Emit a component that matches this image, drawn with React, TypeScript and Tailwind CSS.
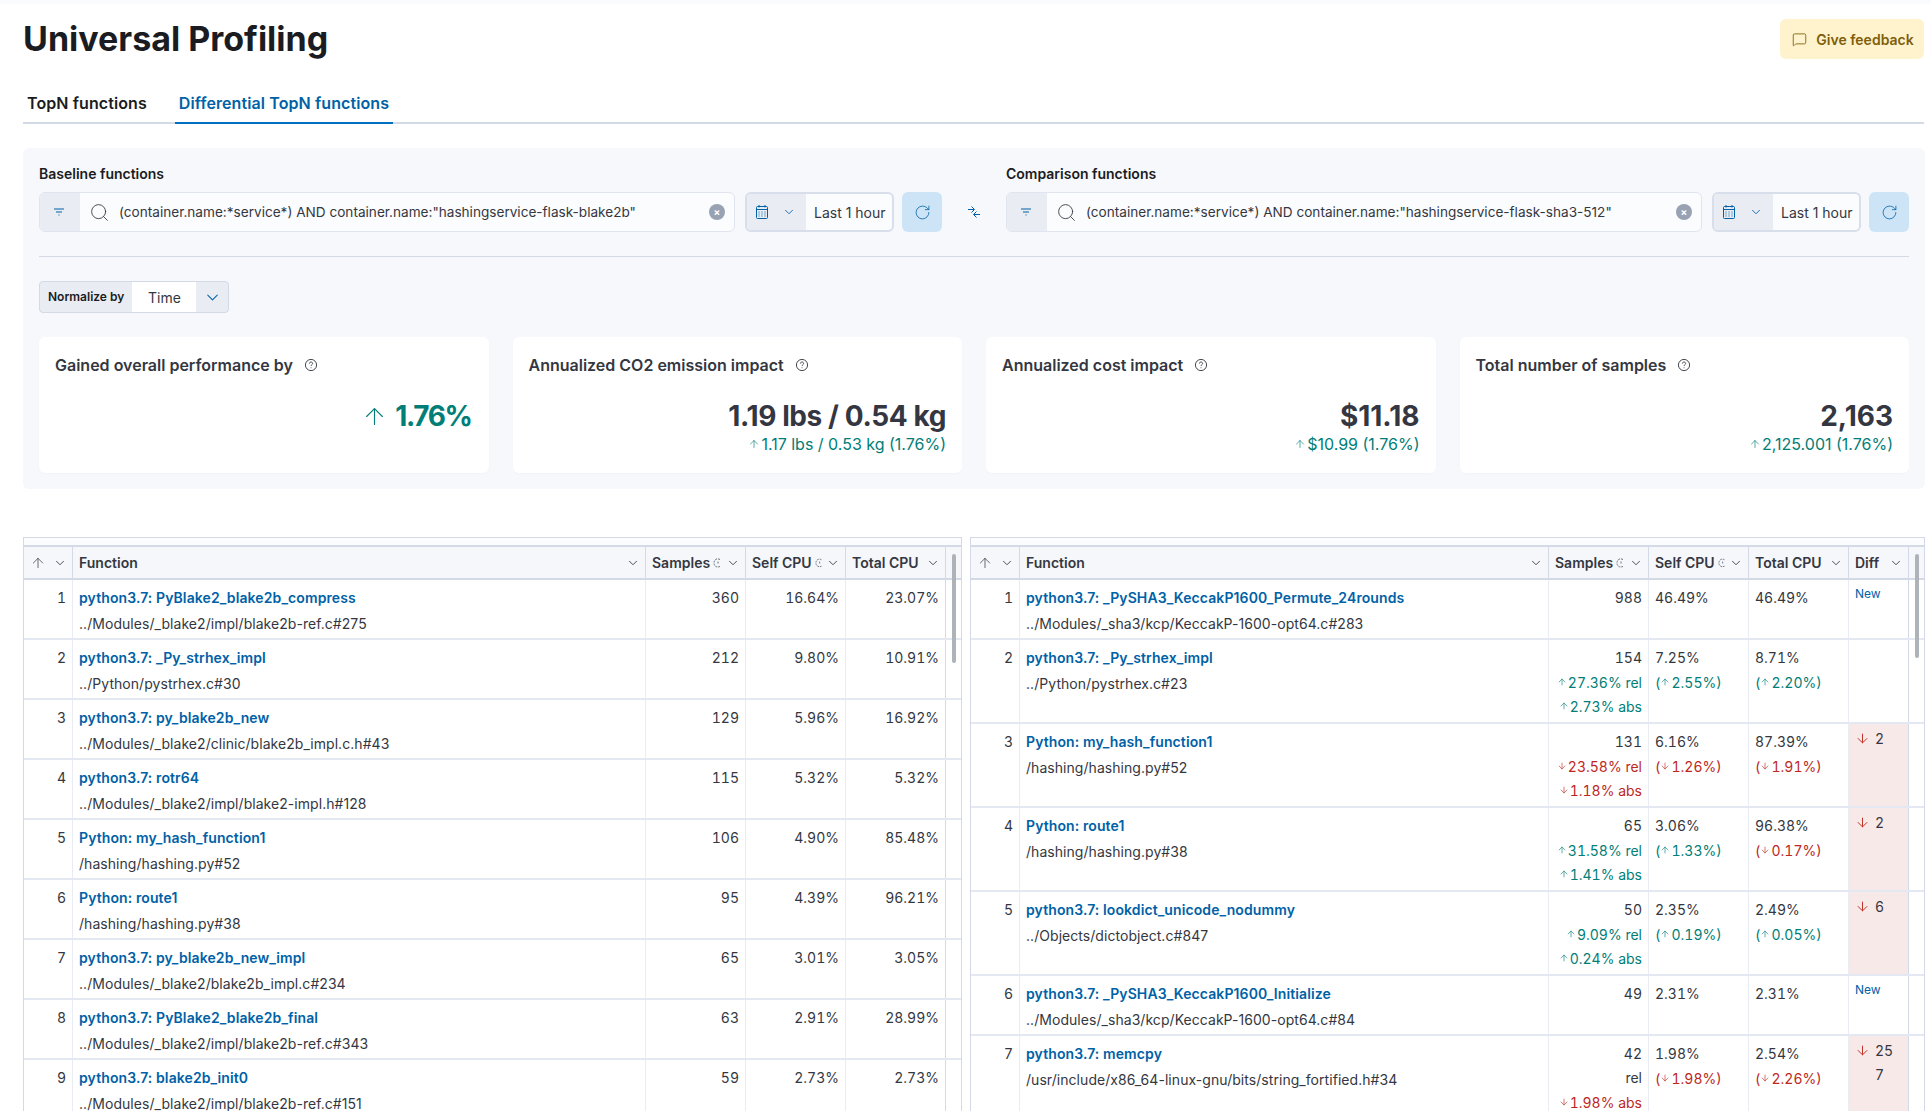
import { ArrowDown, ArrowUp, ChevronDown, MessageSquare, RotateCw, Search } from "lucide-react";
import type { ReactNode } from "react";

type Delta = { up: boolean; text: string };

type LeftRow = { fn: string; file: string; samples: string; self: string; total: string };

type RightRow = {
  fn: string;
  file: string;
  samples: string;
  rel?: Delta;
  abs?: Delta;
  self: string;
  selfDelta?: Delta;
  total: string;
  totalDelta?: Delta;
  diff?: string;
  diffWrap?: string;
  height: string;
  relText?: string;
};

const leftRows: LeftRow[] = [
  { fn: "python3.7: PyBlake2_blake2b_compress", file: "../Modules/_blake2/impl/blake2b-ref.c#275", samples: "360", self: "16.64%", total: "23.07%" },
  { fn: "python3.7: _Py_strhex_impl", file: "../Python/pystrhex.c#30", samples: "212", self: "9.80%", total: "10.91%" },
  { fn: "python3.7: py_blake2b_new", file: "../Modules/_blake2/clinic/blake2b_impl.c.h#43", samples: "129", self: "5.96%", total: "16.92%" },
  { fn: "python3.7: rotr64", file: "../Modules/_blake2/impl/blake2-impl.h#128", samples: "115", self: "5.32%", total: "5.32%" },
  { fn: "Python: my_hash_function1", file: "/hashing/hashing.py#52", samples: "106", self: "4.90%", total: "85.48%" },
  { fn: "Python: route1", file: "/hashing/hashing.py#38", samples: "95", self: "4.39%", total: "96.21%" },
  { fn: "python3.7: py_blake2b_new_impl", file: "../Modules/_blake2/blake2b_impl.c#234", samples: "65", self: "3.01%", total: "3.05%" },
  { fn: "python3.7: PyBlake2_blake2b_final", file: "../Modules/_blake2/impl/blake2b-ref.c#343", samples: "63", self: "2.91%", total: "28.99%" },
  { fn: "python3.7: blake2b_init0", file: "../Modules/_blake2/impl/blake2b-ref.c#151", samples: "59", self: "2.73%", total: "2.73%" },
];

const rightRows: RightRow[] = [
  { fn: "python3.7: _PySHA3_KeccakP1600_Permute_24rounds", file: "../Modules/_sha3/kcp/KeccakP-1600-opt64.c#283", samples: "988", self: "46.49%", total: "46.49%", diff: "New", height: "h-[60px]" },
  {
    fn: "python3.7: _Py_strhex_impl",
    file: "../Python/pystrhex.c#23",
    samples: "154",
    rel: { up: true, text: "27.36% rel" },
    abs: { up: true, text: "2.73% abs" },
    self: "7.25%",
    selfDelta: { up: true, text: "2.55%" },
    total: "8.71%",
    totalDelta: { up: true, text: "2.20%" },
    height: "h-[84px]",
  },
  {
    fn: "Python: my_hash_function1",
    file: "/hashing/hashing.py#52",
    samples: "131",
    rel: { up: false, text: "23.58% rel" },
    abs: { up: false, text: "1.18% abs" },
    self: "6.16%",
    selfDelta: { up: false, text: "1.26%" },
    total: "87.39%",
    totalDelta: { up: false, text: "1.91%" },
    diff: "2",
    height: "h-[84px]",
  },
  {
    fn: "Python: route1",
    file: "/hashing/hashing.py#38",
    samples: "65",
    rel: { up: true, text: "31.58% rel" },
    abs: { up: true, text: "1.41% abs" },
    self: "3.06%",
    selfDelta: { up: true, text: "1.33%" },
    total: "96.38%",
    totalDelta: { up: false, text: "0.17%" },
    diff: "2",
    height: "h-[84px]",
  },
  {
    fn: "python3.7: lookdict_unicode_nodummy",
    file: "../Objects/dictobject.c#847",
    samples: "50",
    rel: { up: true, text: "9.09% rel" },
    abs: { up: true, text: "0.24% abs" },
    self: "2.35%",
    selfDelta: { up: true, text: "0.19%" },
    total: "2.49%",
    totalDelta: { up: true, text: "0.05%" },
    diff: "6",
    height: "h-[84px]",
  },
  { fn: "python3.7: _PySHA3_KeccakP1600_Initialize", file: "../Modules/_sha3/kcp/KeccakP-1600-opt64.c#84", samples: "49", self: "2.31%", total: "2.31%", diff: "New", height: "h-[60px]" },
  {
    fn: "python3.7: memcpy",
    file: "/usr/include/x86_64-linux-gnu/bits/string_fortified.h#34",
    samples: "42",
    relText: "rel",
    abs: { up: false, text: "1.98% abs" },
    self: "1.98%",
    selfDelta: { up: false, text: "1.98%" },
    total: "2.54%",
    totalDelta: { up: false, text: "2.26%" },
    diff: "25",
    diffWrap: "7",
    height: "h-[84px]",
  },
];

const leftCols = "grid-cols-[49px_573px_100px_100px_100px]";
const rightCols = "grid-cols-[49px_529px_100px_100px_100px_60px]";

function FilterIcon() {
  return (
    <svg width="16" height="16" viewBox="0 0 16 16" fill="none" stroke="#0061a6" strokeWidth="1">
      <path d="M3 5h10M5 8h6M7.500 11h1" />
    </svg>
  );
}

function CalendarIcon() {
  return (
    <svg width="16" height="16" viewBox="0 0 16 16" fill="none" stroke="#0061a6" strokeWidth="1">
      <rect x="2.500" y="2.500" width="11" height="12" rx="1" />
      <path d="M2.500 5.500h11M5 1v2.500M11 1v2.500" />
      <path d="M4.500 8h1M7.500 8h1M10.500 8h1M4.500 10h1M7.500 10h1M10.500 10h1M4.500 12h1M7.500 12h1M10.500 12h1" />
    </svg>
  );
}

function CompareIcon() {
  return (
    <svg width="14" height="14" viewBox="0 0 14 14" fill="none" stroke="#0061a6" strokeWidth="1">
      <path d="M1 4.500h6M4.500 1.500l3 3-3 3M13 9.500H7M9.500 6.500l-3 3 3 3" />
    </svg>
  );
}

function HelpIcon() {
  return (
    <svg width="14" height="14" viewBox="0 0 14 14" fill="none" stroke="#343741" strokeWidth="0.9">
      <circle cx="7" cy="7" r="5.600" />
      <path d="M5.400 5.600c0-1 .7-1.600 1.600-1.600s1.600.6 1.600 1.500c0 1.200-1.600 1.300-1.600 2.500M7 9.400v.8" />
    </svg>
  );
}

// the clipped sort-info icon squeezed next to the column title
function ClippedIcon() {
  return (
    <svg width="9" height="12" viewBox="0 0 9 12" fill="none" stroke="#69707d" strokeWidth="1" strokeDasharray="2 1">
      <path d="M7 2.500C3 0.500 1 3.500 1 6s2 5 6 3.500" />
      <path d="M5 4.500v3" />
    </svg>
  );
}

function Arrow({ up, size = 10, className = "" }: { up: boolean; size?: number; className?: string }) {
  const Icon = up ? ArrowUp : ArrowDown;
  return <Icon size={size} strokeWidth={1.5} className={`inline-block shrink-0 ${className}`} />;
}

function DeltaLine({ delta }: { delta: Delta }) {
  return (
    <div className={`flex h-6 items-center justify-end gap-px tabular-nums ${delta.up ? "text-[#007e77]" : "text-[#bd271e]"}`}>
      <Arrow up={delta.up} />
      <span>{delta.text}</span>
    </div>
  );
}

function Paren({ delta }: { delta: Delta }) {
  return (
    <div className={`flex h-6 items-center tabular-nums ${delta.up ? "text-[#007e77]" : "text-[#bd271e]"}`}>
      (<Arrow up={delta.up} />
      <span className="ml-px">{delta.text})</span>
    </div>
  );
}

function QueryBar({ label, query }: { label: string; query: string }) {
  return (
    <div className="flex w-[903px] shrink-0 flex-col">
      <div className="flex h-[44px] items-start pt-[16px] text-[14px] leading-[20px] font-semibold text-[#1a1c21]">{label}</div>
      <div className="flex h-10 items-center">
        <div className="flex h-10 w-[696px] shrink-0 items-center overflow-hidden rounded-md border border-[#dfe4ef] bg-[#fbfcfd]">
          <div className="flex h-full w-[40px] items-center justify-center bg-[#e9edf3] pr-[2px]">
            <FilterIcon />
          </div>
          <Search size={21} strokeWidth={1} className="ml-[9px] text-[#343741]" />
          <span className="ml-[9px] flex-1 truncate text-[13.6px] text-[#343741]">{query}</span>
          <div className="mr-[9px] flex h-4 w-4 items-center justify-center rounded-full bg-[#98a2b3] text-[10px] leading-none font-bold text-white">×</div>
        </div>
        <div className="ml-[10px] flex h-10 w-[149px] shrink-0 items-center overflow-hidden rounded-md border-2 border-[#d8deea] bg-[#fbfcfd]">
          <div className="flex h-full w-[59px] items-center gap-[12px] bg-[#e9edf3] pl-[7px]">
            <CalendarIcon />
            <ChevronDown size={14} strokeWidth={1.5} className="text-[#0061a6]" />
          </div>
          <span className="ml-2 text-[14px] whitespace-nowrap text-[#343741]">Last 1 hour</span>
        </div>
        <div className="ml-2 flex h-10 w-10 shrink-0 items-center justify-center rounded-md bg-[#cce4f5]">
          <RotateCw size={17} strokeWidth={1.1} className="text-[#0061a6]" />
        </div>
      </div>
    </div>
  );
}

function StatCard({ title, children }: { title: string; children: ReactNode }) {
  return (
    <div className="h-[136px] flex-1 rounded-md bg-white p-4 shadow-[0_1px_2px_rgba(152,162,179,0.05)]">
      <div className="flex h-6 items-center gap-[11px] text-[16px] font-semibold text-[#343741]">
        <span>{title}</span>
        <HelpIcon />
      </div>
      <div className="mt-[21px] flex flex-col items-end">{children}</div>
    </div>
  );
}

function HeaderCell({ title, clipped = false, spread = false, last = false }: { title: string; clipped?: boolean; spread?: boolean; last?: boolean }) {
  return (
    <div className={`flex h-full items-center gap-[3px] pr-[5px] pl-[6px] text-[14px] font-semibold whitespace-nowrap text-[#343741] ${spread ? "" : "justify-between"} ${last ? "" : "border-r border-[#d3dae6]"}`}>
      <span>{title}</span>
      {clipped && <ClippedIcon />}
      <ChevronDown size={14} strokeWidth={1.5} className={`shrink-0 ${spread ? "ml-auto" : ""}`} />
    </div>
  );
}

function TableHeader({ cols, children }: { cols: string; children: ReactNode }) {
  return (
    <>
      <div className="h-[9px] border-b-2 border-[#d3dae6] bg-[#fbfcfd]" />
      <div className={`grid h-[33px] border-b-2 border-[#d3dae6] bg-[#f5f7fa] ${cols}`}>
        <div className="flex items-center justify-between border-r border-[#d3dae6] pr-[5px] pl-[6px] text-[#343741]">
          <ArrowUp size={16} strokeWidth={1.1} />
          <ChevronDown size={14} strokeWidth={1.5} />
        </div>
        {children}
      </div>
    </>
  );
}

function FunctionCell({ fn, file }: { fn: string; file: string }) {
  return (
    <div className="border-r border-[#e9edf3] px-[6px] pt-[6px] normal-nums">
      <div className="h-6 leading-6 font-semibold tracking-[0.1px] whitespace-nowrap text-[#0061a6]">{fn}</div>
      <div className="mt-[2px] h-6 leading-6 tracking-[0.05px] whitespace-nowrap text-[#343741]">{file}</div>
    </div>
  );
}

function LeftTable() {
  return (
    <div className="relative h-full w-[939px] overflow-hidden border-x border-t border-[#d3dae6]">
      <TableHeader cols={leftCols}>
        <HeaderCell title="Function" />
        <HeaderCell title="Samples" clipped spread />
        <HeaderCell title="Self CPU" clipped spread />
        <HeaderCell title="Total CPU" />
      </TableHeader>
      {leftRows.map((row, i) => (
        <div key={row.fn} className={`grid h-[60px] border-b-2 border-[#e3e8f2] text-[14px] text-[#343741] tabular-nums ${leftCols}`}>
          <div className="border-r border-[#e9edf3] pt-[6px] pr-[6px] text-right leading-6">{i + 1}</div>
          <FunctionCell fn={row.fn} file={row.file} />
          <div className="border-r border-[#e9edf3] pt-[6px] pr-[6px] text-right leading-6">{row.samples}</div>
          <div className="border-r border-[#e9edf3] pt-[6px] pr-[6px] text-right leading-6">{row.self}</div>
          <div className="border-r border-[#d3dae6] pt-[6px] pr-[6px] text-right leading-6">{row.total}</div>
        </div>
      ))}
      <div className="absolute top-[16px] left-[928px] h-[109px] w-1 rounded-sm bg-[#aeb3ba]" />
    </div>
  );
}

function DiffCell({ row }: { row: RightRow }) {
  if (row.diff === "New") {
    return <div className="border-r border-[#d3dae6] px-[6px] pt-[2px] text-[12px] leading-6 text-[#0061a6]">New</div>;
  }
  if (!row.diff) {
    return <div className="border-r border-[#d3dae6]" />;
  }
  return (
    <div className="border-r border-[#d3dae6] bg-[#f8e9e9] pt-[2px] pl-[6px] text-[14px] text-[#343741] tabular-nums">
      <div className="flex h-6 items-center gap-[5px]">
        <Arrow up={false} size={15} className="text-[#bd271e]" />
        <span>{row.diff}</span>
      </div>
      {row.diffWrap && <div className="mt-[1px] pl-[20px] leading-[24px]">{row.diffWrap}</div>}
    </div>
  );
}

function RightTable() {
  return (
    <div className="relative h-full w-[955px] overflow-hidden border-x border-t border-[#d3dae6]">
      <TableHeader cols={rightCols}>
        <HeaderCell title="Function" />
        <HeaderCell title="Samples" clipped spread />
        <HeaderCell title="Self CPU" clipped spread />
        <HeaderCell title="Total CPU" />
        <HeaderCell title="Diff" />
      </TableHeader>
      {rightRows.map((row, i) => (
        <div key={row.fn} className={`grid border-b-2 border-[#e3e8f2] text-[14px] text-[#343741] tabular-nums ${row.height} ${rightCols}`}>
          <div className="border-r border-[#e9edf3] pt-[6px] pr-[6px] text-right leading-6">{i + 1}</div>
          <FunctionCell fn={row.fn} file={row.file} />
          <div className="border-r border-[#e9edf3] pt-[6px] pr-[6px] text-right">
            <div className="h-6 leading-6">{row.samples}</div>
            {row.rel && <DeltaLine delta={row.rel} />}
            {row.relText && <div className="h-6 leading-6">{row.relText}</div>}
            {row.abs && <DeltaLine delta={row.abs} />}
          </div>
          <div className="border-r border-[#e9edf3] px-[6px] pt-[6px]">
            <div className="h-6 leading-6">{row.self}</div>
            {row.selfDelta && <Paren delta={row.selfDelta} />}
          </div>
          <div className="border-r border-[#e9edf3] px-[6px] pt-[6px]">
            <div className="h-6 leading-6">{row.total}</div>
            {row.totalDelta && <Paren delta={row.totalDelta} />}
          </div>
          <DiffCell row={row} />
        </div>
      ))}
      <div className="absolute top-[16px] left-[944px] h-[104px] w-1 rounded-sm bg-[#aeb3ba]" />
    </div>
  );
}

function DeltaSub({ text }: { text: string }) {
  return (
    <div className="-mt-[2px] flex h-6 items-center gap-px text-[16px] text-[#007e77]">
      <ArrowUp size={12} strokeWidth={1.3} />
      <span>{text}</span>
    </div>
  );
}

export default function App() {
  return (
    <div className="h-[1111px] overflow-hidden bg-white font-['Inter',sans-serif] text-[#343741]">
      <div className="h-1 bg-[#fafbfd]" />
      <div className="flex h-[59px] items-start justify-between pr-[7px] pl-[23px]">
        <h1 className="pt-[15px] text-[34px] leading-[40px] font-bold text-[#1a1c21]">Universal Profiling</h1>
        <div className="mt-[15px] flex h-10 w-[144px] items-center justify-center gap-[9px] rounded-md bg-[#fef3cd] pl-[2px] text-[14px] font-semibold text-[#7f5f0a]">
          <MessageSquare size={15} strokeWidth={1.4} />
          <span>Give feedback</span>
        </div>
      </div>
      <div className="mr-[7px] ml-[23px] flex h-[61px] items-end border-b-2 border-[#d3dae6] text-[16px] font-semibold tracking-[0.1px]">
        <div className="flex h-[40px] w-[129px] items-center pt-[2px] pl-[4px] text-[#1a1c21]">TopN functions</div>
        <div className="-mb-[2px] ml-[23px] flex h-[42px] w-[218px] items-center justify-center border-b-2 border-[#0071c2] pt-[2px] text-[#0061a6]">Differential TopN functions</div>
      </div>

      <div className="mt-[24px] mr-[6px] ml-[23px] h-[341px] rounded-md bg-[#f7f8fc] px-4">
        <div className="flex items-start">
          <QueryBar label="Baseline functions" query={'(container.name:*service*) AND container.name:"hashingservice-flask-blake2b"'} />
          <div className="flex h-[84px] w-[64px] shrink-0 items-end justify-center pb-[13px]">
            <CompareIcon />
          </div>
          <QueryBar label="Comparison functions" query={'(container.name:*service*) AND container.name:"hashingservice-flask-sha3-512"'} />
        </div>
        <div className="mt-[24px] h-px bg-[#d3dae6]" />
        <div className="mt-[24px] flex h-8 w-[190px] items-center overflow-hidden rounded-[4px] border border-[#d3dae6] bg-[#e9edf3]">
          <div className="flex h-full w-[92px] items-center pl-2 text-[12px] font-semibold text-[#1a1c21]">Normalize by</div>
          <div className="flex h-full w-[64px] items-center bg-white pl-4 text-[14px] text-[#343741]">Time</div>
          <div className="flex flex-1 items-center justify-center text-[#0061a6]">
            <ChevronDown size={19} strokeWidth={1.3} />
          </div>
        </div>
        <div className="mt-6 flex gap-6">
          <StatCard title="Gained overall performance by">
            <div className="flex items-center gap-[7px] pr-[1px] text-[28px] leading-[36px] font-bold tracking-[-1.4px] text-[#007e77]">
              <ArrowUp size={27} strokeWidth={1} />
              <span>1.76%</span>
            </div>
          </StatCard>
          <StatCard title="Annualized CO2 emission impact">
            <div className="text-[28px] leading-[36px] font-bold tracking-[-0.4px] text-[#343741]">1.19 lbs / 0.54 kg</div>
            <DeltaSub text="1.17 lbs / 0.53 kg (1.76%)" />
          </StatCard>
          <StatCard title="Annualized cost impact">
            <div className="text-[28px] leading-[36px] font-bold text-[#343741]">$11.18</div>
            <DeltaSub text="$10.99 (1.76%)" />
          </StatCard>
          <StatCard title="Total number of samples">
            <div className="text-[28px] leading-[36px] font-bold text-[#343741]">2,163</div>
            <DeltaSub text="2,125.001 (1.76%)" />
          </StatCard>
        </div>
      </div>

      <div className="mt-[48px] mr-[6px] ml-[23px] flex h-[600px] gap-2">
        <LeftTable />
        <RightTable />
      </div>
    </div>
  );
}
